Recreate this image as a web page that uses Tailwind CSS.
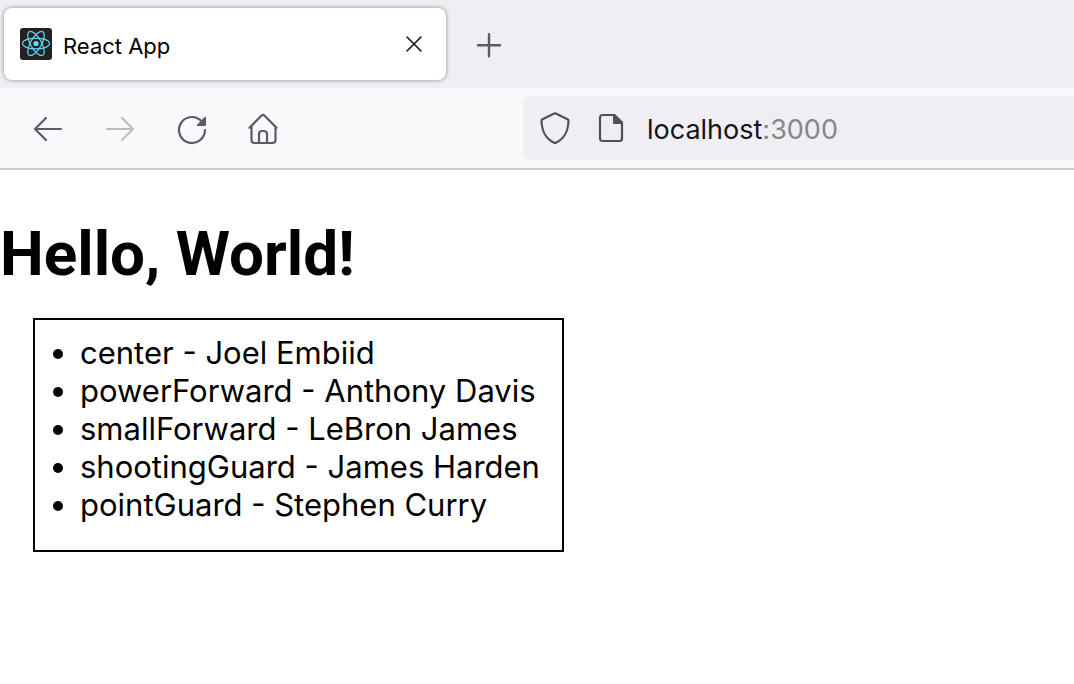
<!DOCTYPE html>
<html lang="en">
<head>
<meta charset="utf-8">
<title>React App</title>
<script src="https://cdn.jsdelivr.net/npm/@tailwindcss/browser@4"></script>
</head>
<body class="min-h-screen overflow-x-hidden bg-white font-['Inter',sans-serif] text-black">
<header>
  <div class="flex h-22 items-center gap-6 bg-[#efeef3] pl-1">
    <div class="flex h-18 w-[442px] items-center rounded-lg bg-white pr-5 pl-4 shadow-[0_0_4px_rgba(80,80,100,0.65)]">
      <svg class="size-8" viewBox="0 0 32 32" fill="none" stroke="#61dafb" aria-hidden="true">
        <rect width="32" height="32" rx="3" fill="#222" stroke="none"/>
        <g stroke-width="1.2">
          <ellipse cx="16" cy="15.5" rx="13.5" ry="5.4"/>
          <ellipse cx="16" cy="15.5" rx="13.5" ry="5.4" transform="rotate(60 16 15.5)"/>
          <ellipse cx="16" cy="15.5" rx="13.5" ry="5.4" transform="rotate(120 16 15.5)"/>
        </g>
        <circle cx="16" cy="15.5" r="2.6" fill="#61dafb" stroke="none"/>
      </svg>
      <span class="ml-[11px] flex-1 pt-1 text-[22px] leading-8">React App</span>
      <button type="button" aria-label="Close tab" class="size-6">
        <svg class="size-6" viewBox="0 0 24 24" fill="none" stroke="#15141a" stroke-width="1.6" stroke-linecap="round"><path d="M5 5l14 14M19 5L5 19"/></svg>
      </button>
    </div>
    <button type="button" aria-label="New tab" class="size-9">
      <svg class="size-9" viewBox="0 0 36 36" fill="none" stroke="#5b5b66" stroke-width="2.4" stroke-linecap="round"><path d="M8 19.200h22M19 8.200v22"/></svg>
    </button>
  </div>
  <div class="flex h-[82px] items-center border-b-2 border-[#cccccf] bg-[#f9f9fb]">
    <nav class="flex flex-none gap-10 pt-0.5 pl-8" aria-label="Navigation">
      <button type="button" aria-label="Back" class="size-8">
        <svg class="size-8" viewBox="0 0 32 32" fill="none" stroke="#5b5b66" stroke-width="2.200" stroke-linecap="round" stroke-linejoin="round"><path d="M29 16H3M14 5L3 16l11 11"/></svg>
      </button>
      <button type="button" aria-label="Forward" disabled class="size-8">
        <svg class="size-8" viewBox="0 0 32 32" fill="none" stroke="#bdbdc1" stroke-width="2.200" stroke-linecap="round" stroke-linejoin="round"><path d="M3 16h26M18 5l11 11-11 11"/></svg>
      </button>
      <button type="button" aria-label="Reload" class="size-8">
        <svg class="size-8" viewBox="0 0 32 32" fill="none" stroke="#5b5b66" stroke-width="2.200" stroke-linecap="round"><path d="M29 17a13 13 0 1 1-4.500-9.800"/><path d="M30 4.300v7.700a1 1 0 0 1-1 1h-7.500c-.8 0-1-.8-.5-1.300l7.600-7.700c.5-.5 1.400-.4 1.400.3z" fill="#5b5b66" stroke="none"/></svg>
      </button>
      <button type="button" aria-label="Home" class="size-8">
        <svg class="size-8" viewBox="0 0 32 32" fill="none" stroke="#5b5b66" stroke-width="2.200" stroke-linecap="round" stroke-linejoin="round"><path d="M1.500 14.700L13.600 2.500a2 2 0 0 1 2.800 0L28.500 14.700M3.500 13.500v13.500a3 3 0 0 0 3 3h18a3 3 0 0 0 3-3V13.500M11 30V21a3 3 0 0 1 3-3h2a3 3 0 0 1 3 3v9"/></svg>
      </button>
    </nav>
    <div class="ml-[243px] flex h-16 flex-1 items-center rounded-l-lg bg-[#efeef3] pl-4">
      <svg class="size-8" viewBox="0 0 32 32" fill="none" stroke="#505055" stroke-width="2.200" stroke-linejoin="round" aria-hidden="true"><path d="M15.200 1.500a2 2 0 0 1 1.600 0L28.500 7.300a2 2 0 0 1 1 1.900C29 18.500 26.500 26 16.900 30.800a2 2 0 0 1-1.800 0C5.500 26 3 18.500 2.500 9.200a2 2 0 0 1 1-1.900z"/></svg>
      <svg class="ml-6 size-8" viewBox="0 0 32 32" fill="none" stroke="#505055" stroke-width="2.200" stroke-linejoin="round" aria-hidden="true"><path d="M7.500 3H19.500L27 10.500V26.500A2.500 2.500 0 0 1 24.500 29H7.500A2.500 2.500 0 0 1 5 26.500V5.500A2.500 2.500 0 0 1 7.500 3z"/><path d="M18 3v8a1 1 0 0 0 1 1H27.500V10.500L20 3z" fill="#505055" stroke="none"/></svg>
      <a href="#" class="ml-5 pt-1 text-[27px] leading-8 text-[#15141a]">localhost<span class="text-[#86868b]">:3000</span></a>
    </div>
  </div>
</header>
<main>
  <h1 class="mt-[46px] font-['Roboto',sans-serif] text-[62px] leading-[76px] font-bold">Hello, World!</h1>
  <ul class="mt-[26px] ml-[33px] w-fit list-disc border-2 border-black pt-[14px] pr-[22px] pb-[26px] pl-[45px] text-[31px] leading-[38px]">
    <li>center - Joel Embiid</li>
    <li>powerForward - Anthony Davis</li>
    <li>smallForward - LeBron James</li>
    <li>shootingGuard - James Harden</li>
    <li>pointGuard - Stephen Curry</li>
  </ul>
</main>
</body>
</html>
